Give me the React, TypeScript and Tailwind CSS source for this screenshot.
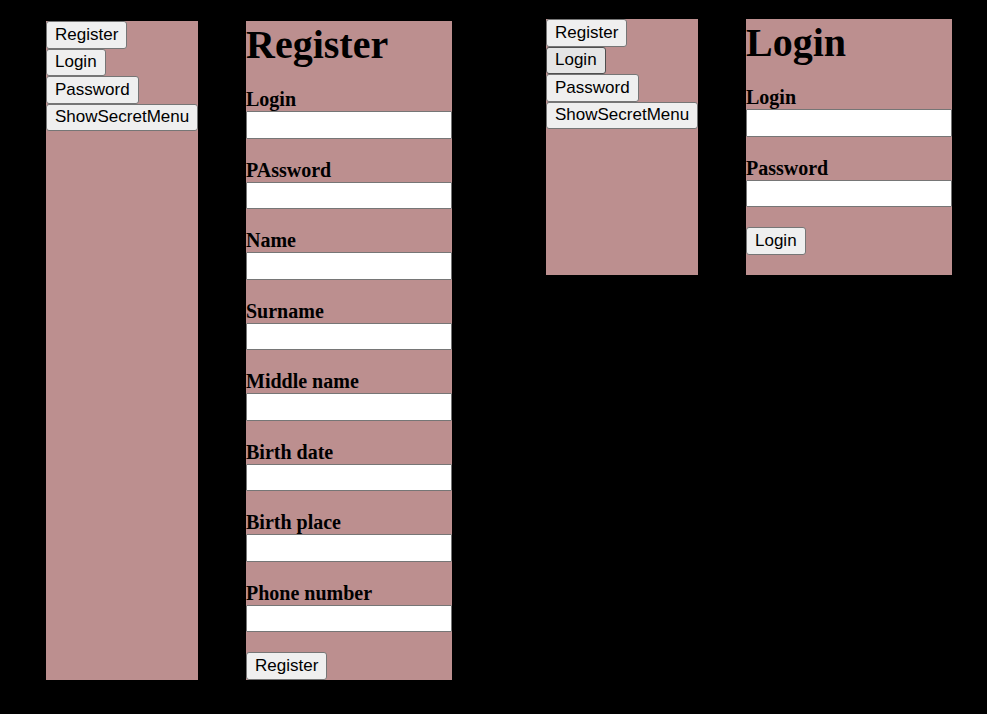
import { useId } from "react";

const menuItems = ["Register", "Login", "Password", "ShowSecretMenu"];

function Button({ text, active = false }: { text: string; active?: boolean }) {
  return (
    <button
      type="button"
      className={
        "h-7 even:h-[27px] even:pb-px rounded-[3px] border px-2 font-['Liberation_Sans',Arial,sans-serif] text-[17px] leading-5 text-black flex items-center " +
        (active ? "border-[#4f4f4f] bg-[#e5e5e5]" : "border-[#767676] bg-[#efefef]")
      }
    >
      {text}
    </button>
  );
}

function Menu({ active }: { active?: string }) {
  return (
    <nav className="flex w-[152px] flex-col items-start bg-[#bc8f8f]">
      {menuItems.map((item) => (
        <Button key={item} text={item} active={item === active} />
      ))}
    </nav>
  );
}

function Field({ label, secret }: { label: string; secret: boolean }) {
  const id = useId();
  return (
    <div className="group flex flex-col">
      <label htmlFor={id} className="text-[20px] leading-[23px] font-bold">
        {label}
      </label>
      <input
        id={id}
        type={secret ? "password" : "text"}
        className="h-7 w-full rounded-[1px] border border-[#767676] bg-white px-1 group-even:h-[27px]"
      />
    </div>
  );
}

function Form({ title, fields }: { title: string; fields: string[] }) {
  return (
    <form className="w-[206px] bg-[#bc8f8f]">
      <h1 className="mb-[19px] text-[40px] leading-[48px] font-bold">{title}</h1>
      <div className="mb-5 flex flex-col gap-5">
        {fields.map((label) => (
          <Field key={label} label={label} secret={label.toLowerCase() === "password"} />
        ))}
      </div>
      <div>
        <Button text={title} />
      </div>
    </form>
  );
}

export default function App() {
  return (
    <main className="flex min-h-screen items-start gap-[94px] bg-black px-[46px] font-['Liberation_Serif','Times_New_Roman',serif] text-black">
      <section className="flex gap-12 pt-[21px]">
        <Menu />
        <Form
          title="Register"
          fields={["Login", "PAssword", "Name", "Surname", "Middle name", "Birth date", "Birth place", "Phone number"]}
        />
      </section>
      <section className="flex gap-12 pt-[19px]">
        <Menu active="Login" />
        <div className="bg-[#bc8f8f] pb-5">
          <Form title="Login" fields={["Login", "Password"]} />
        </div>
      </section>
    </main>
  );
}
